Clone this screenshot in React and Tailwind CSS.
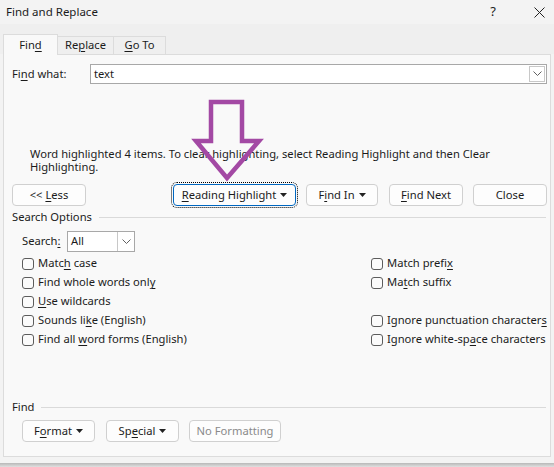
import React from "react";

const font = { fontFamily: '"Segoe UI", "Noto Sans", sans-serif' };

const Key = ({ children }) => <u className="underline underline-offset-2">{children}</u>;

const Chevron = () => (
    <svg width="9" height="6" viewBox="0 0 9 6" className="text-[#606060]">
        <path d="M0.5 0.5 L4.5 4.5 L8.5 0.5" fill="none" stroke="currentColor" strokeWidth="1" />
    </svg>
);

const Caret = () => (
    <svg width="7" height="4" viewBox="0 0 7 4" className="ml-[4px] inline-block">
        <path d="M0 0 H7 L3.5 4 Z" fill="#222" />
    </svg>
);

const Button = ({ children, className = "", disabled, focused }) => (
    <div
        className={`h-[22px] shrink-0 flex items-center justify-center whitespace-pre rounded-[4px] border bg-[#fdfdfd] ${
            focused ? "border-[#0067c0] outline outline-1 outline-dotted outline-black outline-offset-[1px]" : "border-[#d0d0d0]"
        } ${disabled ? "text-[#8a8a8a]" : "text-[#1b1b1b]"} ${className}`}
    >
        {children}
    </div>
);

const Check = ({ children }) => (
    <div className="h-[19px] flex items-center gap-[4px] whitespace-nowrap">
        <span className="w-[12px] h-[12px] shrink-0 rounded-[3px] border border-[#5c5c5c] bg-[#fbfbfb]" />
        <span>{children}</span>
    </div>
);

const GroupLabel = ({ children, lineLeft }) => (
    <div className="flex items-center h-[14px]">
        <span className="pl-[8px] shrink-0">{children}</span>
        <span className={`h-px bg-[#dadada] flex-1 mr-[4px] ${lineLeft}`} />
    </div>
);

export default function App() {
    return (
        <div className="relative w-[554px] h-[467px] bg-[#f3f3f3] text-[11.2px] text-[#1b1b1b] overflow-hidden" style={font}>
            {/* title bar */}
            <div className="h-[24px] flex items-center px-[6px] text-[11.5px]">
                <span className="flex-1">Find and Replace</span>
                <span className="mr-[38px] text-[13px]">?</span>
                <svg width="11" height="11" viewBox="0 0 11 11" className="mr-[3px]">
                    <path d="M0.5 0.5 L10.5 10.5 M10.5 0.5 L0.5 10.5" stroke="#222" strokeWidth="1" />
                </svg>
            </div>

            {/* tabs */}
            <div className="h-[30px] bg-[#efefef] flex items-end pl-[3px]">
                <div className="w-[55px] h-[21px] flex items-center justify-center bg-[#f9f9f9] border border-b-0 border-[#dcdcdc] relative top-px">
                    Fin<Key>d</Key>
                </div>
                <div className="w-[56px] h-[18px] flex items-center justify-center border border-l-0 border-b-0 border-[#dcdcdc]">
                    Re<Key>p</Key>lace
                </div>
                <div className="w-[52px] h-[18px] flex items-center justify-center border border-l-0 border-b-0 border-[#dcdcdc]">
                    <Key>G</Key>o To
                </div>
            </div>

            {/* page */}
            <div className="mx-[3px] h-[403px] bg-[#f9f9f9] border border-[#dcdcdc] flex flex-col">
                <div className="mt-[9px] h-[20px] flex items-center">
                    <span className="pl-[8px] w-[86px]">
                        Fi<Key>n</Key>d what:
                    </span>
                    <div className="flex-1 mr-[3px] h-[20px] bg-white border border-[#a8a8a8] flex items-center">
                        <span className="flex-1 pl-[3px]">text</span>
                        <span className="w-[16px] h-[16px] mr-px border border-[#c8c8c8] flex items-center justify-center">
                            <Chevron />
                        </span>
                    </div>
                </div>

                <p className="mt-[63px] pl-[26px] pr-[50px] leading-[13px]">
                    Word highlighted 4 items. To clear highlighting, select Reading Highlight and then Clear Highlighting.
                </p>

                <div className="mt-[11px] flex items-center px-[8px]">
                    <Button className="w-[74px]">
                        {"<< "}
                        <Key>L</Key>ess
                    </Button>
                    <Button focused className="w-[123px] ml-[87px]">
                        <Key>R</Key>eading Highlight
                        <Caret />
                    </Button>
                    <Button className="w-[72px] ml-[10px]">
                        F<Key>i</Key>nd In
                        <Caret />
                    </Button>
                    <Button className="w-[74px] ml-[11px]">
                        <Key>F</Key>ind Next
                    </Button>
                    <Button className="w-[74px] ml-[10px]">Close</Button>
                </div>

                <div className="mt-[4px]">
                    <GroupLabel lineLeft="ml-[7px]">Search Options</GroupLabel>
                </div>

                <div className="mt-[7px] flex items-center pl-[18px] h-[21px]">
                    <span className="w-[45px]">
                        Search<Key>:</Key>
                    </span>
                    <div className="w-[68px] h-[21px] bg-white border border-[#a8a8a8] flex items-center">
                        <span className="flex-1 pl-[3px]">All</span>
                        <span className="w-[17px] h-[19px] border-l border-[#c8c8c8] flex items-center justify-center">
                            <Chevron />
                        </span>
                    </div>
                </div>

                <div className="mt-[2px] grid grid-cols-[349px_1fr] pl-[18px]">
                    <div className="flex flex-col">
                        <Check>
                            Matc<Key>h</Key> case
                        </Check>
                        <Check>
                            Find whole words onl<Key>y</Key>
                        </Check>
                        <Check>
                            <Key>U</Key>se wildcards
                        </Check>
                        <Check>
                            Sounds li<Key>k</Key>e (English)
                        </Check>
                        <Check>
                            Find all <Key>w</Key>ord forms (English)
                        </Check>
                    </div>
                    <div className="flex flex-col">
                        <Check>
                            Match prefi<Key>x</Key>
                        </Check>
                        <Check>
                            Ma<Key>t</Key>ch suffix
                        </Check>
                        <div className="h-[19px]" />
                        <Check>
                            Ignore punctuation character<Key>s</Key>
                        </Check>
                        <Check>
                            Ignore white-sp<Key>a</Key>ce characters
                        </Check>
                    </div>
                </div>

                <div className="mt-[51px]">
                    <GroupLabel lineLeft="ml-[6px]">Find</GroupLabel>
                </div>

                <div className="mt-[6px] flex items-center pl-[18px]">
                    <Button className="w-[73px]">
                        F<Key>o</Key>rmat
                        <Caret />
                    </Button>
                    <Button className="w-[73px] ml-[11px]">
                        Sp<Key>e</Key>cial
                        <Caret />
                    </Button>
                    <Button disabled className="w-[92px] ml-[10px]">
                        No Formatting
                    </Button>
                </div>
            </div>

            {/* window bottom edge */}
            <div className="absolute left-0 right-0 bottom-0 h-[4px] bg-gradient-to-b from-[#b8b8b8] to-[#e0e0e0]" />

            {/* purple outline arrow */}
            <svg className="absolute left-[190px] top-[96px]" width="76" height="90" viewBox="0 0 76 90">
                <path
                    d="M21 6 H52 V45 H69 L37 82 L6 45 H21 Z"
                    fill="none"
                    stroke="#a349a4"
                    strokeWidth="4.5"
                    strokeLinejoin="miter"
                />
            </svg>
        </div>
    );
}
